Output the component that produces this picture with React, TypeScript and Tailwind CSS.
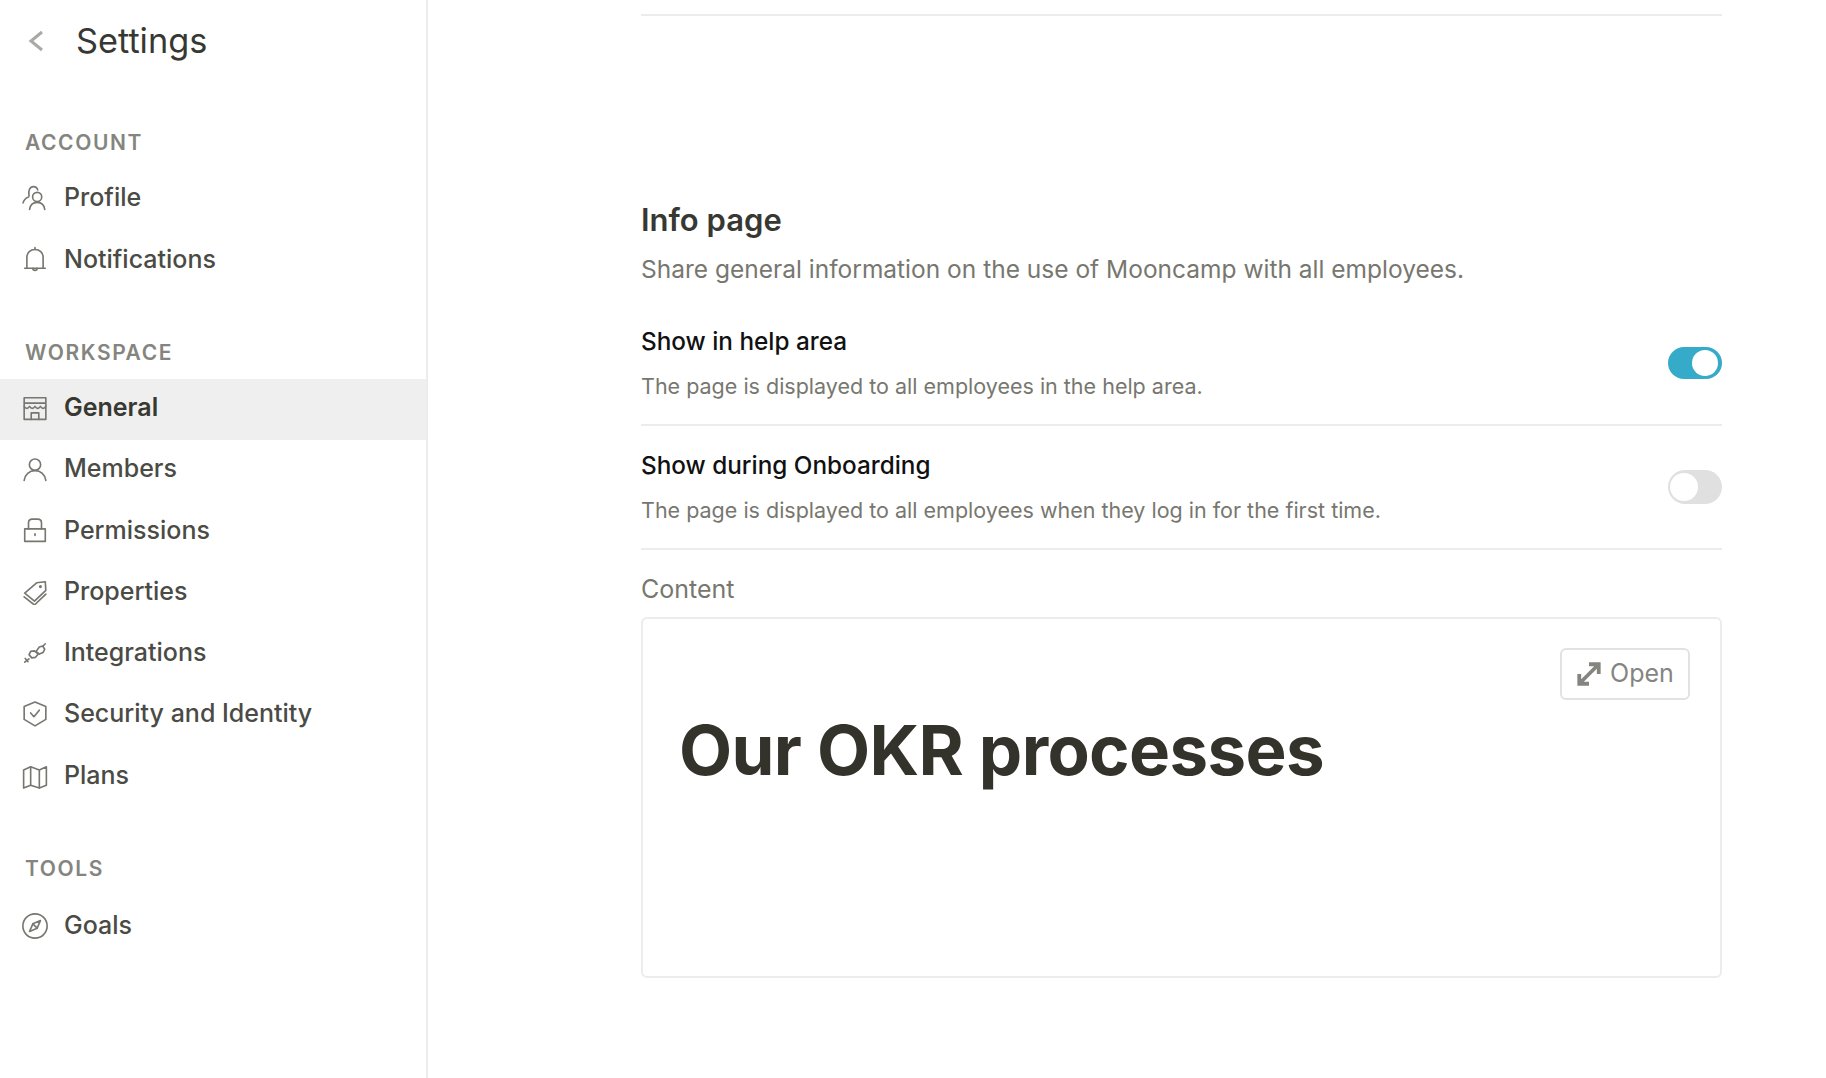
import { ReactNode } from "react";

const stroke = {
  fill: "none",
  stroke: "currentColor",
  strokeWidth: 1.5,
  strokeLinecap: "round" as const,
  strokeLinejoin: "round" as const,
};

const Icon = ({ children }: { children: ReactNode }) => (
  <svg viewBox="0 0 24 24" className="h-[26px] w-[26px] shrink-0 text-[#77776f]" {...stroke}>
    {children}
  </svg>
);

const ProfileIcon = () => (
  <Icon>
    <circle cx="14" cy="11" r="4.200" />
    <path d="M7 22.500c.6-4 3.400-6.500 7-6.500s6.400 2.500 7 6.500" />
    <path d="M6.500 10C5.500 5 7.500 1.500 10.500 1.500c2 0 3.500 1 4 3" />
    <path d="M1 16.500c.7-2.600 2.200-4.500 5-5.500" />
  </Icon>
);

const BellIcon = () => (
  <Icon>
    <path d="M2.500 20.500h19M4.500 20.500V10.500C4.500 6 7.800 3.200 12 3.200s7.500 2.800 7.500 7.300v10" />
    <path d="M12 3.200V1.500M10 20.500c0 2.600 4 2.600 4 0" />
  </Icon>
);

const StoreIcon = () => (
  <Icon>
    <path d="M2 2.500h20v20H2zM2 7.500h20" />
    <path d="M2 10.500c1.600 2.400 3.400 2.400 5 0 1.600 2.400 3.400 2.400 5 0 1.600 2.400 3.400 2.400 5 0 1.600 2.400 3.400 2.400 5 0" />
    <path d="M8.500 22.500v-6h7v6" />
  </Icon>
);

const MemberIcon = () => (
  <Icon>
    <circle cx="12" cy="8" r="5.200" />
    <path d="M2 22.500c.6-5.500 4.800-9 10-9s9.400 3.500 10 9" />
  </Icon>
);

const LockIcon = () => (
  <Icon>
    <rect x="2.500" y="11" width="19" height="11.500" />
    <path d="M6 11V5.500C6 3.500 7.500 2 9.500 2h5c2 0 3.500 1.500 3.500 3.500V11M12 15.500v1.500" />
  </Icon>
);

const TagIcon = () => (
  <Icon>
    <path d="M2.500 13 13.500 3.500 21.500 2.500l.5 8L11.500 20.500z" />
    <circle cx="17" cy="7" r=".7" />
    <path d="M2 16.500l9.500 7.500L22 14" />
  </Icon>
);

const PlugIcon = () => (
  <Icon>
    <path d="M13 10.500 16 6.500l3-1 2 3-1.500 3-3.500 1.500zM15 13l-3.500-3-3.500 .5-1.500 3 2.500 3 3.500-.5z" />
    <path d="M2.500 20.500 6.500 17.500M19.500 5.500 21.500 3.500M3 17l2.500 3" />
  </Icon>
);

const ShieldIcon = () => (
  <Icon>
    <path d="M12 1 22 5v12L12 23 2 17V5z" />
    <path d="m8 11 3 3.500 5-6" />
  </Icon>
);

const MapIcon = () => (
  <Icon>
    <path d="M1.500 6.500 8 3.500l8 3 6.500-3v17l-6.500 2.500-8-2.500-6.500 2.500z" />
    <path d="M8 3.500v17M16 6.500v16.500" />
  </Icon>
);

const CompassIcon = () => (
  <Icon>
    <circle cx="12" cy="12" r="11.200" />
    <path d="M17 7l-7 3-3 7 7-3z" />
    <path d="M10 10l4 4" />
  </Icon>
);

type NavItem = { label: string; icon: ReactNode; active?: boolean };

const NavRow = ({ label, icon, active }: NavItem) => (
  <div
    className={`flex h-[61.300px] items-center gap-[16px] pb-[3px] pl-[22px] text-[25px] ${
      active ? "bg-[#efefef] font-semibold text-[#383832]" : "font-medium text-[#4b4b46]"
    }`}
  >
    {icon}
    <span>{label}</span>
  </div>
);

const SectionLabel = ({ children, className }: { children: ReactNode; className: string }) => (
  <div className={`pl-[25px] text-[21px] leading-6 font-semibold tracking-[1.600px] text-[#85857f] ${className}`}>
    {children}
  </div>
);

const ToggleRow = ({ title, text, on }: { title: string; text: string; on?: boolean }) => (
  <div className="flex h-[124px] items-center justify-between border-b-2 border-[#ececec]">
    <div className="pb-[2px]">
      <div className="text-[24.300px] leading-8 font-medium text-[#111111]">{title}</div>
      <div className="mt-[15px] text-[21.500px] leading-7 text-[#77776f]">{text}</div>
    </div>
    {on ? (
      <div className="flex h-8 w-[54px] items-center justify-end rounded-full bg-[#36abc9] pr-[4px]">
        <div className="h-[26px] w-[26px] rounded-full bg-white" />
      </div>
    ) : (
      <div className="flex h-[34px] w-[54px] items-center rounded-full bg-[#e0e0e0] pl-[2px]">
        <div className="h-7 w-7 rounded-full bg-white" />
      </div>
    )}
  </div>
);

export default function App() {
  return (
    <div className="flex h-[1078px] overflow-hidden bg-white font-['Inter',sans-serif]">
      <aside className="w-[428px] shrink-0 border-r-2 border-[#ececec]">
        <div className="flex items-center pt-[19px] pl-[28px]">
          <svg viewBox="0 0 16 22" className="h-[22px] w-4 text-[#a9a9a5]" fill="none" stroke="currentColor" strokeWidth="3">
            <path d="M14 2 3 11l11 9" />
          </svg>
          <h1 className="ml-[32px] text-[34.300px] leading-[44px] font-normal text-[#383832]">Settings</h1>
        </div>
        <SectionLabel className="mt-[68px]">ACCOUNT</SectionLabel>
        <div className="mt-[14px]">
          <NavRow label="Profile" icon={<ProfileIcon />} />
          <NavRow label="Notifications" icon={<BellIcon />} />
        </div>
        <SectionLabel className="mt-[49px]">WORKSPACE</SectionLabel>
        <div className="mt-[14px]">
          <NavRow label="General" icon={<StoreIcon />} active />
          <NavRow label="Members" icon={<MemberIcon />} />
          <NavRow label="Permissions" icon={<LockIcon />} />
          <NavRow label="Properties" icon={<TagIcon />} />
          <NavRow label="Integrations" icon={<PlugIcon />} />
          <NavRow label="Security and Identity" icon={<ShieldIcon />} />
          <NavRow label="Plans" icon={<MapIcon />} />
        </div>
        <SectionLabel className="mt-[49px]">TOOLS</SectionLabel>
        <div className="mt-[16px]">
          <NavRow label="Goals" icon={<CompassIcon />} />
        </div>
      </aside>

      <main className="ml-[213px] w-[1081px]">
        <div className="mt-[14px] border-t-2 border-[#ececec]" />
        <h2 className="mt-[184px] text-[31px] leading-[40px] font-semibold text-[#383832]">Info page</h2>
        <p className="mt-[12px] text-[24.500px] leading-[34px] text-[#77776f]">
          Share general information on the use of Mooncamp with all employees.
        </p>
        <div className="mt-[16px]">
          <ToggleRow
            on
            title="Show in help area"
            text="The page is displayed to all employees in the help area."
          />
          <ToggleRow
            title="Show during Onboarding"
            text="The page is displayed to all employees when they log in for the first time."
          />
        </div>
        <div className="mt-[23px] text-[25px] leading-8 text-[#77776f]">Content</div>
        <div className="relative mt-[12px] h-[361px] rounded-[6px] border-2 border-[#ececec] pt-[89px] pl-[36px]">
          <button className="absolute top-[29px] right-[30px] flex h-[52px] w-[130px] items-center justify-center gap-[8px] rounded-[6px] border-2 border-[#e2e2e2] text-[25px] text-[#85857f]">
            <svg viewBox="0 0 24 24" className="h-[26px] w-[26px]" fill="none" stroke="currentColor" strokeWidth="3.500">
              <path d="M3 21 21 3M12 3h9v9M3 12v9h9" />
            </svg>
            Open
          </button>
          <div className="text-[69px] leading-[84px] font-bold tracking-[-0.650px] text-[#33332c]">Our OKR processes</div>
        </div>
      </main>
    </div>
  );
}
